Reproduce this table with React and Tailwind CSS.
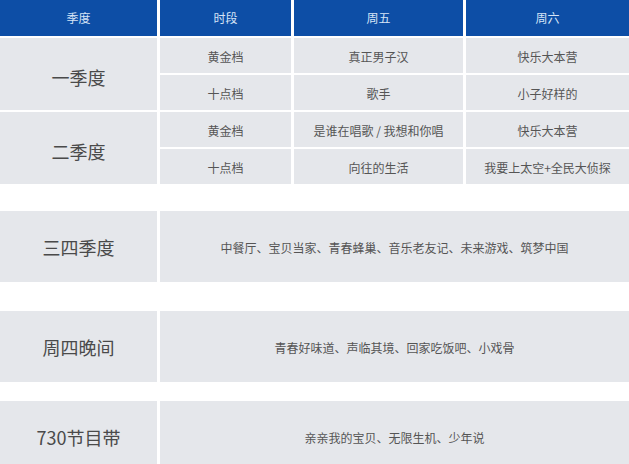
const font = { fontFamily: '"Noto Sans CJK SC", "Noto Sans", sans-serif' };

const seasons = [
  {
    name: "一季度",
    rows: [
      ["黄金档", "真正男子汉", "快乐大本营"],
      ["十点档", "歌手", "小子好样的"],
    ],
  },
  {
    name: "二季度",
    rows: [
      ["黄金档", "是谁在唱歌 / 我想和你唱", "快乐大本营"],
      ["十点档", "向往的生活", "我要上太空+全民大侦探"],
    ],
  },
];

const blocks = [
  { name: "三四季度", text: "中餐厅、宝贝当家、青春蜂巢、音乐老友记、未来游戏、筑梦中国", mt: "mt-[27px]" },
  { name: "周四晚间", text: "青春好味道、声临其境、回家吃饭吧、小戏骨", mt: "mt-[29px]" },
  { name: "730节目带", text: "亲亲我的宝贝、无限生机、少年说", mt: "mt-[19px]" },
];

const cell = "bg-[#e5e7eb] flex items-center justify-center text-[12px] text-[#555] pt-[2px]";

const SeasonGroup = ({ season }) => (
  <div className="grid grid-cols-[157px_131px_169px_1fr] grid-rows-[35px_35px] gap-x-[3px] gap-y-[2px] mt-[2px]">
    <div className="row-span-2 bg-[#e5e7eb] flex items-center justify-center pt-[7px] text-[18px] text-[#4a4a4a]">
      {season.name}
    </div>
    {season.rows.map((r, i) =>
      r.map((t, j) => (
        <div key={`${i}-${j}`} className={cell}>
          {t}
        </div>
      ))
    )}
  </div>
);

const Block = ({ block }) => (
  <div className={`grid grid-cols-[157px_1fr] h-[71px] gap-x-[3px] ${block.mt}`}>
    <div className="bg-[#e5e7eb] flex items-center justify-center pt-[2px] text-[18px] text-[#4a4a4a]">
      {block.name}
    </div>
    <div className={cell}>{block.text}</div>
  </div>
);

export default function App() {
  return (
    <div className="w-[629px] h-[464px] overflow-hidden bg-white" style={font}>
      <div className="grid grid-cols-[157px_131px_169px_1fr] h-[36px] gap-x-[3px]">
        {["季度", "时段", "周五", "周六"].map((h) => (
          <div key={h} className="bg-[#0d4ea6] flex items-center justify-center text-[12px] text-[#d6e4f6]">
            {h}
          </div>
        ))}
      </div>
      {seasons.map((s) => (
        <SeasonGroup key={s.name} season={s} />
      ))}
      {blocks.map((b) => (
        <Block key={b.name} block={b} />
      ))}
    </div>
  );
}
